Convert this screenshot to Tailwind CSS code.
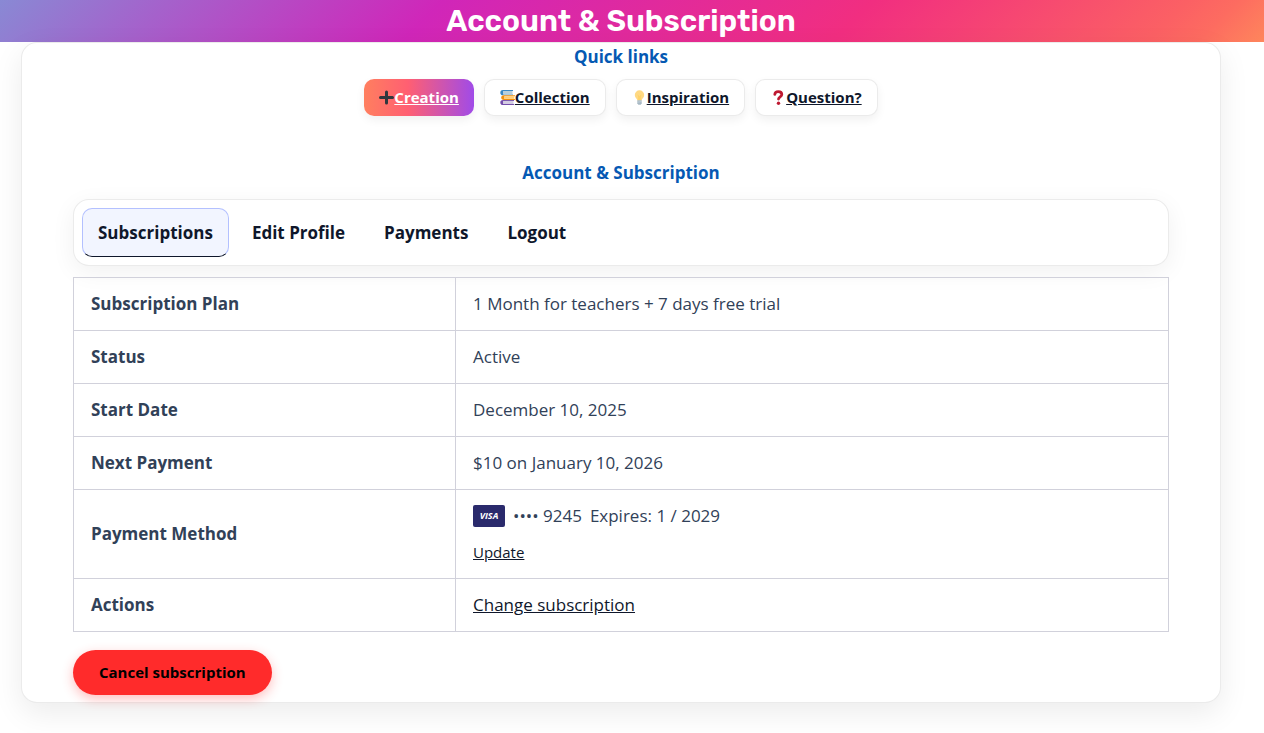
<!DOCTYPE html>
<html lang="en">
<head>
  <meta charset="utf-8">
  <title>Account &amp; Subscription</title>
  <meta name="viewport" content="width=device-width, initial-scale=1">
  <script src="https://cdn.jsdelivr.net/npm/@tailwindcss/browser@4"></script>
</head>
<body class="min-h-screen overflow-x-hidden bg-white font-['Open_Sans',sans-serif] text-[17px] text-slate-700">

  <header class="bg-[linear-gradient(135deg,#8989d4_0%,#a364cc_12%,#d026b9_34%,#f12e80_67%,#fb6064_91%,#fd6c60_95%,#fe865c_100%)] pr-[22px]">
    <h1 class="text-center font-[Rubik,Inter,sans-serif] text-[30px] leading-[42px] font-semibold text-white">Account &amp; Subscription</h1>
  </header>

  <div class="pr-[43px] pl-[21px]">
    <main class="mx-auto max-w-[1200px] rounded-2xl border border-black/8 bg-white px-[51px] pb-[7px] shadow-[0_10px_30px_rgba(2,12,12,0.08)]">

      <section>
        <h2 class="text-center leading-7 font-bold text-[#0559b3]">Quick links</h2>
        <nav class="mt-2 flex flex-wrap justify-center gap-[10px] text-[15px] leading-[21px] font-bold text-slate-900" aria-label="Quick links">
          <a href="#creation" class="flex items-center rounded-[10px] bg-[linear-gradient(90deg,#ff7f5f_0%,#ff5f72_40%,#a04be8_100%)] px-[15px] py-2 text-white shadow-[0_4px_10px_rgba(0,0,0,0.06)]">
            <svg class="h-[15px] w-[15px]" viewBox="0 0 15 15" aria-hidden="true">
              <path d="M7.5 2v11M1.500 7.500h12" stroke="#31373d" stroke-width="3" stroke-linecap="round"/>
            </svg>
            <span class="underline">Creation</span>
          </a>
          <a href="#collection" class="flex items-center rounded-[10px] border border-black/8 bg-white px-[15px] py-[7px] shadow-[0_4px_10px_rgba(0,0,0,0.06)]">
            <svg class="h-[15px] w-[15px]" viewBox="0 0 15 15" aria-hidden="true">
              <path d="M13 0H3C1 0 .3 1.200.3 2.700S1 5.300 3 5.300h10V4.400H3.400V1H13z" fill="#3b88c3"/>
              <path d="M3.200 1H12.500v3.400H3.200z" fill="#b8cfdc"/>
              <path d="M15 5.200H4C2 5.200 1.200 6.200 1.200 7.500S2 9.900 4 9.900h11V8.900H4.400V6.200H15z" fill="#f4900c"/>
              <path d="M4.200 6.200H14.300V8.900H4.200z" fill="#ffcc75"/>
              <path d="M14 9.900H3C1 9.900.3 11 .3 12.400S1 15 3 15h11v-1H3.400v-3.100H14z" fill="#744eaa"/>
              <path d="M3.200 10.900H13.500V14H3.200z" fill="#d3cce2"/>
            </svg>
            <span class="underline">Collection</span>
          </a>
          <a href="#inspiration" class="flex items-center rounded-[10px] border border-black/8 bg-white px-[15px] py-[7px] shadow-[0_4px_10px_rgba(0,0,0,0.06)]">
            <svg class="h-[15px] w-[15px]" viewBox="0 0 15 15" aria-hidden="true">
              <path d="M7.500.3a4.700 4.700 0 0 0-4.700 4.700c0 2.600 2.200 3.300 2.500 5.400h4.400c.3-2.100 2.500-2.800 2.500-5.400A4.700 4.700 0 0 0 7.500.3z" fill="#ffd983"/>
              <path d="M5.700 5.200l1.200 1v4M9.300 5.200l-1.200 1v4" fill="none" stroke="#ffcc4d" stroke-width=".7"/>
              <path d="M5.300 10.300h4.400v2.900l-1 1.500H6.300l-1-1.500z" fill="#a7b8c4"/>
              <path d="M5.300 12.200l4.400-.7" stroke="#d3dde4" stroke-width=".6"/>
            </svg>
            <span class="underline">Inspiration</span>
          </a>
          <a href="#question" class="flex items-center rounded-[10px] border border-black/8 bg-white px-[15px] py-[7px] shadow-[0_4px_10px_rgba(0,0,0,0.06)]">
            <svg class="h-[15px] w-[15px]" viewBox="0 0 15 15" aria-hidden="true">
              <path d="M3.800 4.300C4 2.500 5.400 1.600 7.300 1.600c2.100 0 3.500 1.100 3.500 2.900 0 2.300-3.300 2.300-3.300 4.600" fill="none" stroke="#be1931" stroke-width="2.800" stroke-linecap="round"/>
              <circle cx="7.500" cy="13.200" r="1.700" fill="#be1931"/>
            </svg>
            <span class="underline">Question?</span>
          </a>
        </nav>
      </section>

      <section class="mt-[43px]">
        <h2 class="text-center leading-7 font-bold text-[#0559b3]">Account &amp; Subscription</h2>

        <nav class="mt-3 flex flex-wrap gap-[7px] rounded-2xl border border-black/8 bg-white p-2 leading-[27px] font-bold text-slate-900 shadow-[0_6px_24px_rgba(0,0,0,0.06)]" aria-label="Account">
          <a href="#subscriptions" aria-current="page" class="rounded-[10px] border border-indigo-300/80 border-b-slate-900 bg-[#f2f5ff] px-[15px] py-[10px]">Subscriptions</a>
          <a href="#profile" class="rounded-[10px] border border-transparent px-[15px] py-[10px]">Edit Profile</a>
          <a href="#payments" class="rounded-[10px] border border-transparent px-[15px] py-[10px]">Payments</a>
          <a href="#logout" class="rounded-[10px] border border-transparent px-[15px] py-[10px]">Logout</a>
        </nav>

        <table class="mt-[11px] w-full border-collapse text-left leading-[26px] [&_td]:border [&_td]:border-[#d1d1db] [&_td]:px-[17px] [&_td]:py-[13px] [&_th]:w-[382px] [&_th]:border [&_th]:border-[#d1d1db] [&_th]:px-[17px] [&_th]:py-[13px] [&_th]:font-bold">
          <tbody>
            <tr>
              <th scope="row">Subscription Plan</th>
              <td>1 Month for teachers + 7 days free trial</td>
            </tr>
            <tr>
              <th scope="row">Status</th>
              <td>Active</td>
            </tr>
            <tr>
              <th scope="row">Start Date</th>
              <td>December 10, 2025</td>
            </tr>
            <tr>
              <th scope="row">Next Payment</th>
              <td>$10 on January 10, 2026</td>
            </tr>
            <tr>
              <th scope="row">Payment Method</th>
              <td>
                <div class="flex items-center gap-2">
                  <svg class="h-[22px] w-8" viewBox="0 0 32 22" role="img" aria-label="Visa">
                    <rect width="32" height="22" rx="2" fill="#2a2a6c"/>
                    <text x="16" y="14" text-anchor="middle" font-family="Open Sans, sans-serif" font-size="9" font-weight="700" font-style="italic" fill="#fff">VISA</text>
                  </svg>
                  <span>•••• 9245</span>
                  <span>Expires: 1 / 2029</span>
                </div>
                <a href="#update" class="mt-[10px] block w-fit text-[15px] text-slate-900 underline">Update</a>
              </td>
            </tr>
            <tr>
              <th scope="row">Actions</th>
              <td><a href="#change" class="text-slate-900 underline">Change subscription</a></td>
            </tr>
          </tbody>
        </table>

        <button type="button" class="mt-[18px] rounded-full bg-[#ff2b2b] px-[26px] py-3 text-[15px] leading-[21px] font-bold text-black shadow-[0_4px_12px_rgba(255,43,43,0.3)]">Cancel subscription</button>
      </section>

    </main>
  </div>

</body>
</html>
